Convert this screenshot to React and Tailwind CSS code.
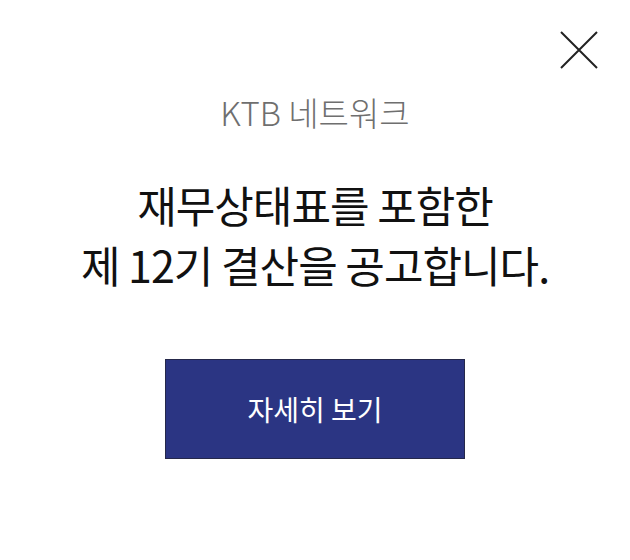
export default function App() {
  return (
    <div
      className="relative w-[630px] h-[560px] bg-white flex flex-col items-center"
      style={{ fontFamily: '"Noto Sans CJK KR", "Noto Sans", sans-serif' }}
    >
      {/* close */}
      <button className="absolute right-[32px] top-[31px] w-[38px] h-[38px]">
        <svg viewBox="0 0 38 38" className="w-full h-full">
          <path d="M1 1 L37 37 M37 1 L1 37" stroke="#222" strokeWidth="2" fill="none" />
        </svg>
      </button>

      <p className="mt-[88px] text-[33px] leading-[48px] font-light text-[#6f6f6f]">
        KTB 네트워크
      </p>

      <h1 className="mt-[38px] text-[43px] leading-[60px] text-[#111] text-center tracking-[-1px]">
        재무상태표를 포함한
        <br />제 12기 결산을 공고합니다.
      </h1>

      <button className="mt-[65px] w-[300px] h-[100px] bg-[#2b3583] border border-[#25284a] text-white text-[28px]">
        자세히 보기
      </button>
    </div>
  );
}
